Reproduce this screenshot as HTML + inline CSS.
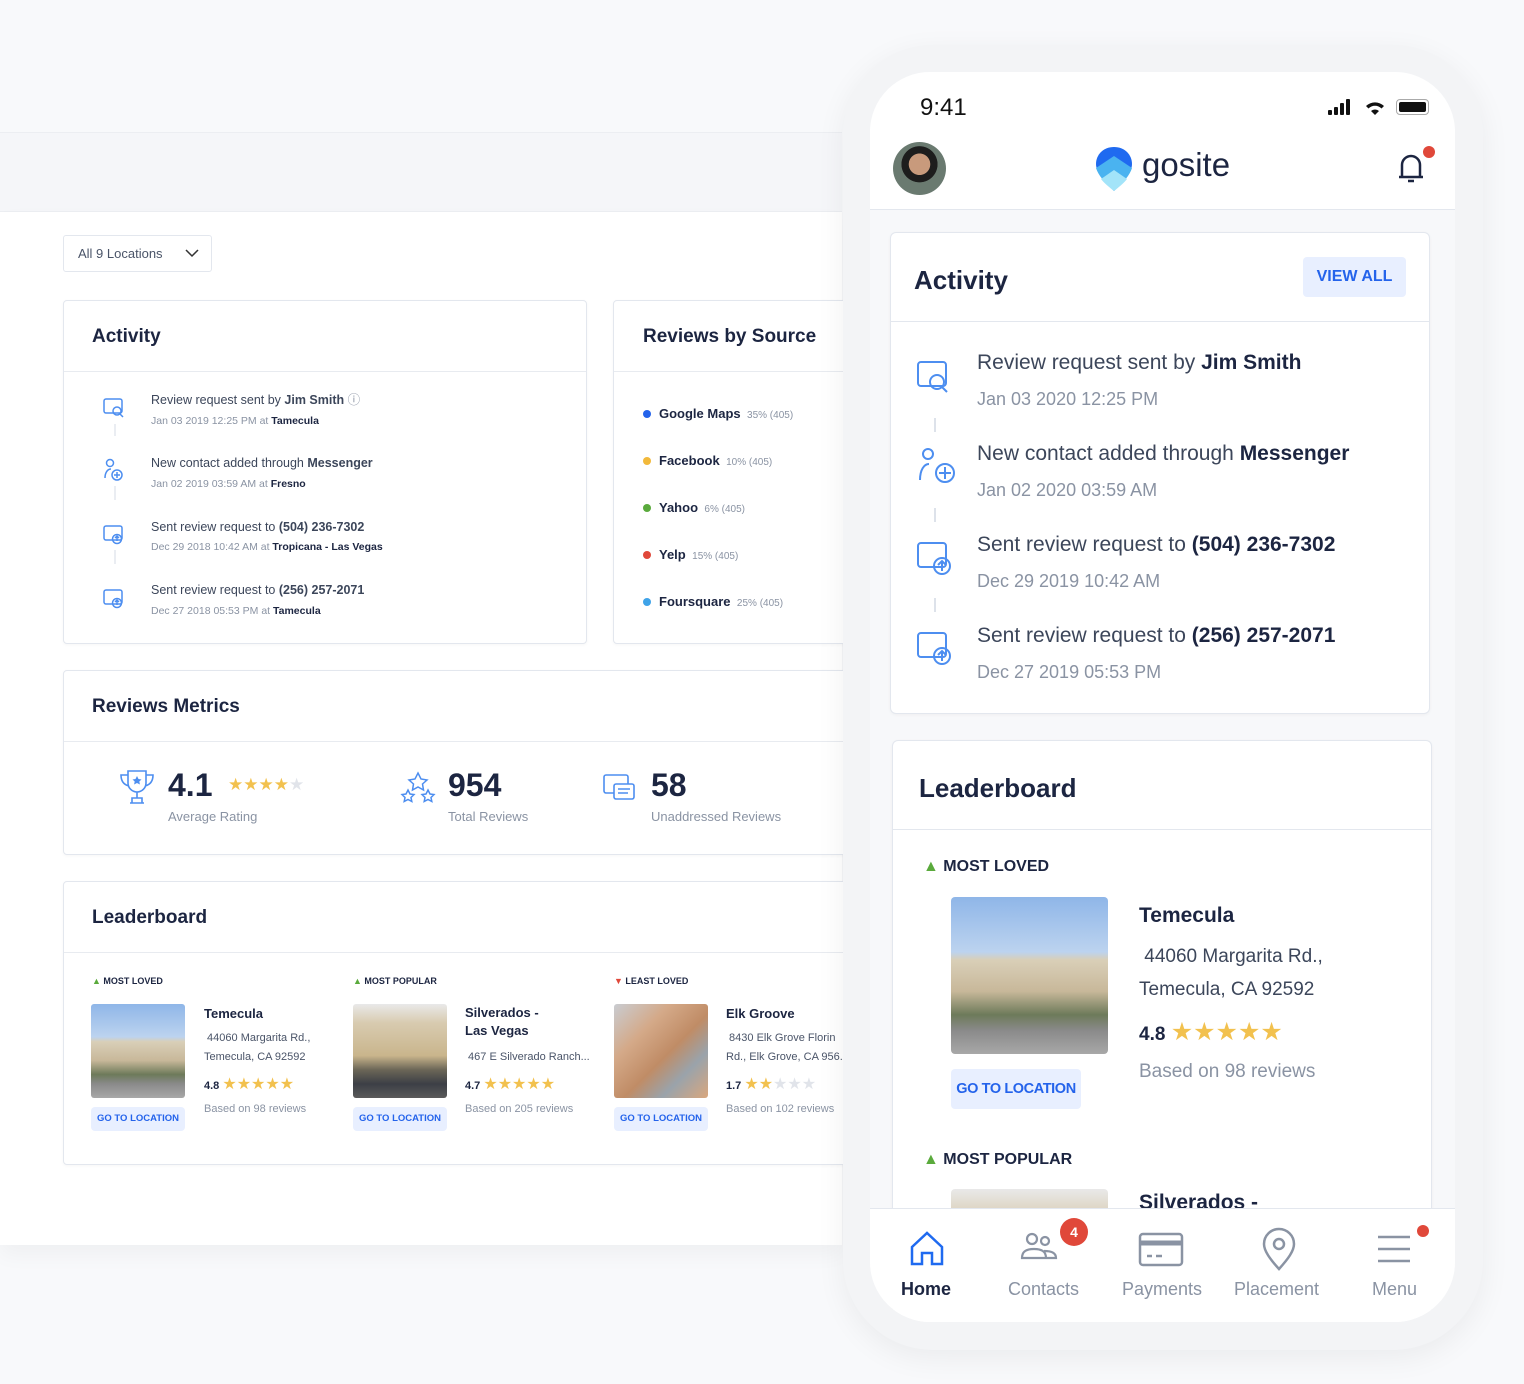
<!DOCTYPE html>
<html><head><meta charset="utf-8"><style>
*{box-sizing:border-box;margin:0;padding:0}
body{width:1524px;height:1384px;background:#f8f9fb;font-family:"Liberation Sans",sans-serif;color:#1c2541;position:relative;overflow:hidden}
.abs{position:absolute}
.card{position:absolute;background:#fff;border:1px solid #e3e7ee;border-radius:4px;box-shadow:0 1px 3px rgba(0,0,0,.04)}
.h{font-weight:bold;color:#1c2541}
.g{color:#8a93a3}
.dot{display:inline-block;width:8px;height:8px;border-radius:50%;margin-right:8px}
.star{color:#f2c14e}
.gs{color:#e1e4ea}
.btn{background:#e8efff;color:#2463eb;font-weight:bold;border-radius:4px;text-align:center;white-space:nowrap}
.photo1{background:linear-gradient(180deg,#8fb6e8 0%,#bcd3ef 35%,#d9cfb8 40%,#c8b89a 60%,#6d7a5a 75%,#8a8a8a 85%,#a8a8a8 100%)}
.photo2{background:linear-gradient(180deg,#e9e9e9 0%,#d8cbb0 20%,#c9b58c 55%,#6b6657 70%,#3c3f46 85%,#5a5a5a 100%)}
.photo3{background:linear-gradient(135deg,#c9ccd1,#d4a988 30%,#c08c66 55%,#9aa3ab 75%,#d9a77d)}
</style></head><body>
<!-- desktop -->
<div class="abs" style="left:0;top:132px;width:842px;height:80px;background:#f5f6f9;border-top:1px solid #eceef2;border-bottom:1px solid #eceef2"></div>
<div class="abs" style="left:0;top:212px;width:842px;height:1033px;background:#fff;box-shadow:0 10px 20px rgba(0,0,0,.04)"></div>
<div class="abs" style="left:63px;top:235px;width:149px;height:37px;border:1px solid #e3e7ee;border-radius:3px;font-size:13px;color:#4a5468;padding:10px 14px">All 9 Locations
<svg style="position:absolute;right:12px;top:13px" width="14" height="9" fill="none" stroke="#333" stroke-width="1.5"><path d="M1 1l6 6 6-6"/></svg></div>

<div class="card" style="left:63px;top:300px;width:524px;height:344px">
 <div class="h" style="position:absolute;left:28px;top:25px;font-size:19px">Activity</div>
 <div style="position:absolute;left:0;top:70px;width:100%;border-top:1px solid #e8ebf0"></div>
 <div style="position:absolute;left:87px;top:88px;font-size:12.5px;line-height:1.8;color:#3c465a">
  <div>Review request sent by <b>Jim Smith</b> <span class="g">ⓘ</span></div><div style="font-size:10.5px" class="g">Jan 03 2019 12:25 PM at <b style="color:#1c2541">Tamecula</b></div>
  <div style="margin-top:22px">New contact added through <b>Messenger</b></div><div style="font-size:10.5px" class="g">Jan 02 2019 03:59 AM at <b style="color:#1c2541">Fresno</b></div>
  <div style="margin-top:22px">Sent review request to <b>(504) 236-7302</b></div><div style="font-size:10.5px" class="g">Dec 29 2018 10:42 AM at <b style="color:#1c2541">Tropicana - Las Vegas</b></div>
  <div style="margin-top:22px">Sent review request to <b>(256) 257-2071</b></div><div style="font-size:10.5px" class="g">Dec 27 2018 05:53 PM at <b style="color:#1c2541">Tamecula</b></div>
 </div>
 <svg style="position:absolute;left:38px;top:95px" width="26" height="220" fill="none" stroke="#4d8ef0" stroke-width="1.5">
  <path d="M13 28v12M13 90v14M13 154v14" stroke="#e3e7ee"/>
  <rect x="2" y="3" width="18" height="14" rx="2"/><circle cx="15" cy="15" r="4"/><line x1="18" y1="18" x2="21" y2="21"/>
  <circle cx="8" cy="67" r="3.5"/><path d="M3 82c0-6 3-9 6-9"/><circle cx="15" cy="79" r="5"/><path d="M15 76v6M12 79h6"/>
  <rect x="2" y="130" width="18" height="14" rx="2"/><circle cx="15" cy="143" r="4.5"/><path d="M15 145v-5M13 142l2-2 2 2"/>
  <rect x="2" y="194" width="18" height="14" rx="2"/><circle cx="15" cy="207" r="4.5"/><path d="M15 209v-5M13 206l2-2 2 2"/>
 </svg>
</div>

<div class="card" style="left:613px;top:300px;width:240px;height:344px">
 <div class="h" style="position:absolute;left:29px;top:25px;font-size:19px">Reviews by Source</div>
 <div style="position:absolute;left:0;top:70px;width:100%;border-top:1px solid #e8ebf0"></div>
 <div style="position:absolute;left:29px;top:90px;font-size:13px;line-height:45px;font-weight:bold">
  <div><span class="dot" style="background:#2463eb"></span>Google Maps <span class="g" style="font-weight:normal;font-size:10px">&nbsp;35% (405)</span></div>
  <div><span class="dot" style="background:#f2b93b"></span>Facebook <span class="g" style="font-weight:normal;font-size:10px">&nbsp;10% (405)</span></div>
  <div><span class="dot" style="background:#5aaa3c"></span>Yahoo <span class="g" style="font-weight:normal;font-size:10px">&nbsp;6% (405)</span></div>
  <div><span class="dot" style="background:#e0483a"></span>Yelp <span class="g" style="font-weight:normal;font-size:10px">&nbsp;15% (405)</span></div>
  <div><span class="dot" style="background:#3fa3e8"></span>Foursquare <span class="g" style="font-weight:normal;font-size:10px">&nbsp;25% (405)</span></div>
 </div>
</div>

<div class="card" style="left:63px;top:670px;width:790px;height:185px">
 <div class="h" style="position:absolute;left:28px;top:25px;font-size:19px">Reviews Metrics</div>
 <div style="position:absolute;left:0;top:70px;width:100%;border-top:1px solid #e8ebf0"></div>
 <svg style="position:absolute;left:54px;top:97px" width="38" height="38" fill="none" stroke="#4d8ef0" stroke-width="1.6"><path d="M10 3h18v12a9 9 0 0 1-18 0zM10 7H3c0 7 4 10 8 11M28 7h7c0 7-4 10-8 11M19 24v6M12 35h14M14 30h10v5H14z"/><path d="M19 8l1.5 3 3 .5-2.2 2 .6 3-2.9-1.5-2.9 1.5.6-3-2.2-2 3-.5z" fill="#4d8ef0" stroke="none"/></svg>
 <div class="h" style="position:absolute;left:104px;top:96px;font-size:32px">4.1</div>
 <div style="position:absolute;left:164px;top:104px;font-size:17px"><span class="star">★★★★</span><span class="gs">★</span></div>
 <div class="g" style="position:absolute;left:104px;top:138px;font-size:13px">Average Rating</div>
 <svg style="position:absolute;left:334px;top:100px" width="40" height="36" fill="none" stroke="#4d8ef0" stroke-width="1.5"><path d="M20 2l3 6 6 1-4.5 4 1 6-5.5-3-5.5 3 1-6L11 9l6-1z"/><path d="M10 19l2 4 4 .5-3 3 .8 4-3.8-2-3.8 2 .8-4-3-3 4-.5zM30 19l2 4 4 .5-3 3 .8 4-3.8-2-3.8 2 .8-4-3-3 4-.5z"/></svg>
 <div class="h" style="position:absolute;left:384px;top:96px;font-size:32px">954</div>
 <div class="g" style="position:absolute;left:384px;top:138px;font-size:13px">Total Reviews</div>
 <svg style="position:absolute;left:538px;top:102px" width="36" height="34" fill="none" stroke="#4d8ef0" stroke-width="1.6"><rect x="2" y="2" width="24" height="18" rx="2"/><rect x="12" y="11" width="20" height="15" rx="2" fill="#fff"/><path d="M16 16h12M16 20h10"/></svg>
 <div class="h" style="position:absolute;left:587px;top:96px;font-size:32px">58</div>
 <div class="g" style="position:absolute;left:587px;top:138px;font-size:13px">Unaddressed Reviews</div>
</div>

<div class="card" style="left:63px;top:881px;width:790px;height:284px">
 <div class="h" style="position:absolute;left:28px;top:25px;font-size:19px">Leaderboard</div>
 <div style="position:absolute;left:0;top:70px;width:100%;border-top:1px solid #e8ebf0"></div>
</div>
<div class="abs" style="left:92px;top:976px;font-size:9px;font-weight:bold"><span style="color:#5aaa3c">▲</span> MOST LOVED</div>
<div class="abs" style="left:353px;top:976px;font-size:9px;font-weight:bold"><span style="color:#5aaa3c">▲</span> MOST POPULAR</div>
<div class="abs" style="left:614px;top:976px;font-size:9px;font-weight:bold"><span style="color:#e0483a">▼</span> LEAST LOVED</div>
<div class="abs photo1" style="left:91px;top:1004px;width:94px;height:94px;border-radius:3px"></div>
<div class="abs photo2" style="left:353px;top:1004px;width:94px;height:94px;border-radius:3px"></div>
<div class="abs photo3" style="left:614px;top:1004px;width:94px;height:94px;border-radius:3px"></div>
<div class="abs btn" style="left:91px;top:1107px;width:94px;height:24px;font-size:9.5px;line-height:24px">GO TO LOCATION</div>
<div class="abs btn" style="left:353px;top:1107px;width:94px;height:24px;font-size:9.5px;line-height:24px">GO TO LOCATION</div>
<div class="abs btn" style="left:614px;top:1107px;width:94px;height:24px;font-size:9.5px;line-height:24px">GO TO LOCATION</div>
<div class="abs" style="left:204px;top:1004px;font-size:11px;line-height:19px;width:130px">
 <div class="h" style="font-size:13px">Temecula</div><div style="margin-top:6px;color:#4a5468">&nbsp;44060 Margarita Rd.,<br>Temecula, CA 92592</div>
 <div style="margin-top:8px"><b>4.8</b> <span class="star" style="font-size:16px">★★★★★</span></div><div class="g" style="margin-top:4px">Based on 98 reviews</div></div>
<div class="abs" style="left:465px;top:1004px;font-size:11px;line-height:18px;width:130px">
 <div class="h" style="font-size:13px">Silverados -<br>Las Vegas</div><div style="margin-top:8px;color:#4a5468">&nbsp;467 E Silverado Ranch...</div>
 <div style="margin-top:10px"><b>4.7</b> <span class="star" style="font-size:16px">★★★★★</span></div><div class="g" style="margin-top:5px">Based on 205 reviews</div></div>
<div class="abs" style="left:726px;top:1004px;font-size:11px;line-height:19px;width:116px;overflow:hidden;white-space:nowrap">
 <div class="h" style="font-size:13px">Elk Groove</div><div style="margin-top:6px;color:#4a5468">&nbsp;8430 Elk Grove Florin<br>Rd., Elk Grove, CA 956..</div>
 <div style="margin-top:8px"><b>1.7</b> <span class="star" style="font-size:16px">★★</span><span class="gs" style="font-size:16px">★★★</span></div><div class="g" style="margin-top:4px">Based on 102 reviews</div></div>

<!-- phone -->
<div class="abs" style="left:843px;top:45px;width:640px;height:1305px;border-radius:90px;background:#f3f4f6;box-shadow:0 8px 30px rgba(0,0,0,.06)"></div>
<div class="abs" style="left:870px;top:72px;width:585px;height:1250px;border-radius:60px;background:#f7f8fa;overflow:hidden">
 <div style="position:absolute;left:0;top:0;width:100%;height:138px;background:#fff;border-bottom:1px solid #e3e7ee"></div>
 <div style="position:absolute;left:50px;top:22px;font-size:24px;color:#111">9:41</div>
 <div style="position:absolute;left:458px;top:38px;width:4px;height:5px;background:#111;border-radius:1px"></div>
 <div style="position:absolute;left:464px;top:35px;width:4px;height:8px;background:#111;border-radius:1px"></div>
 <div style="position:absolute;left:470px;top:31px;width:4px;height:12px;background:#111;border-radius:1px"></div>
 <div style="position:absolute;left:476px;top:27px;width:4px;height:16px;background:#111;border-radius:1px"></div>
 <svg style="position:absolute;left:493px;top:26px" width="24" height="18"><path d="M12 17l-4-4a6 6 0 0 1 8 0z M3 8a13 13 0 0 1 18 0l-2.5 2.5a9 9 0 0 0-13 0z" fill="#111"/></svg>
 <div style="position:absolute;left:526px;top:27px;width:33px;height:16px;border-radius:4px;border:1.5px solid #aaa;padding:2px"><div style="width:100%;height:100%;background:#111;border-radius:2px"></div></div>
 <div style="position:absolute;left:23px;top:70px;width:53px;height:53px;border-radius:50%;background:radial-gradient(circle at 50% 42%,#c89a7c 0 26%,#1d1d1d 27% 44%,#6a7a70 45%)"></div>
 <svg style="position:absolute;left:225px;top:74px" width="38" height="46"><path d="M19 1C8 1 1 9 1 18c0 9 9 18 18 27 9-9 18-18 18-27C37 9 30 1 19 1z" fill="#1f6af0"/><path d="M1 22l18-12 18 12c-2 7-9 15-18 23C10 37 3 29 1 22z" fill="#4ab3f0"/><path d="M6 33l13-9 13 9c-3 4-8 8-13 12-5-4-10-8-13-12z" fill="#a3e4f9"/></svg>
 <div style="position:absolute;left:272px;top:74px;font-size:33px;color:#1c2541">gosite</div>
 <svg style="position:absolute;left:524px;top:75px" width="36" height="40" fill="none" stroke="#1c2541" stroke-width="2.5"><path d="M5 30h24M8 30V18a9 9 0 0 1 18 0v12M14 34h6"/></svg>
 <div style="position:absolute;left:553px;top:74px;width:12px;height:12px;border-radius:50%;background:#e0483a"></div>

 <div class="card" style="left:20px;top:160px;width:540px;height:482px;border-radius:6px">
  <div class="h" style="position:absolute;left:23px;top:32px;font-size:26px">Activity</div>
  <div class="btn" style="position:absolute;left:412px;top:24px;width:103px;height:40px;line-height:40px;font-size:16px">VIEW ALL</div>
  <div style="position:absolute;left:0;top:88px;width:100%;border-top:1px solid #e3e7ee"></div>
  <div style="position:absolute;left:86px;top:112px;font-size:21px;line-height:36px;color:#3c465a">
   <div>Review request sent by <b style="color:#1c2541">Jim Smith</b></div><div class="g" style="font-size:18px">Jan 03 2020 12:25 PM</div>
   <div style="margin-top:19px">New contact added through <b style="color:#1c2541">Messenger</b></div><div class="g" style="font-size:18px">Jan 02 2020 03:59 AM</div>
   <div style="margin-top:19px">Sent review request to <b style="color:#1c2541">(504) 236-7302</b></div><div class="g" style="font-size:18px">Dec 29 2019 10:42 AM</div>
   <div style="margin-top:19px">Sent review request to <b style="color:#1c2541">(256) 257-2071</b></div><div class="g" style="font-size:18px">Dec 27 2019 05:53 PM</div>
  </div>
  <svg style="position:absolute;left:24px;top:125px" width="42" height="320" fill="none" stroke="#4d8ef0" stroke-width="2">
   <rect x="3" y="4" width="28" height="24" rx="3"/><circle cx="22" cy="24" r="7"/><line x1="27" y1="29" x2="32" y2="34"/>
   <line x1="20" y1="60" x2="20" y2="74" stroke="#dde2ea"/>
   <circle cx="13" cy="96" r="5"/><path d="M5 122c0-10 4-16 9-16"/><circle cx="30" cy="115" r="9"/><path d="M30 109v12M24 115h12"/>
   <line x1="20" y1="150" x2="20" y2="164" stroke="#dde2ea"/>
   <rect x="3" y="185" width="28" height="24" rx="3"/><circle cx="27" cy="208" r="8"/><path d="M27 213v-9M23 207l4-4 4 4"/>
   <line x1="20" y1="240" x2="20" y2="254" stroke="#dde2ea"/>
   <rect x="3" y="275" width="28" height="24" rx="3"/><circle cx="27" cy="298" r="8"/><path d="M27 303v-9M23 297l4-4 4 4"/>
  </svg>
 </div>

 <div class="card" style="left:22px;top:668px;width:540px;height:600px;border-radius:6px">
  <div class="h" style="position:absolute;left:26px;top:32px;font-size:26px">Leaderboard</div>
  <div style="position:absolute;left:0;top:88px;width:100%;border-top:1px solid #e3e7ee"></div>
  <div style="position:absolute;left:30px;top:117px;font-size:16px;font-weight:bold"><span style="color:#5aaa3c">▲</span> MOST LOVED</div>
  <div class="photo1" style="position:absolute;left:58px;top:156px;width:157px;height:157px;border-radius:4px"></div>
  <div class="btn" style="position:absolute;left:58px;top:328px;width:130px;height:40px;line-height:40px;font-size:14.5px;letter-spacing:-0.4px">GO TO LOCATION</div>
  <div style="position:absolute;left:246px;top:158px;font-size:19px;line-height:33px;color:#3c465a">
   <div class="h" style="font-size:21px">Temecula</div><div style="margin-top:8px">&nbsp;44060 Margarita Rd.,<br>Temecula, CA 92592</div>
   <div style="margin-top:10px"><b style="color:#1c2541">4.8</b> <span class="star" style="font-size:25px">★★★★★</span></div><div class="g" style="margin-top:4px">Based on 98 reviews</div></div>
  <div style="position:absolute;left:30px;top:410px;font-size:16px;font-weight:bold"><span style="color:#5aaa3c">▲</span> MOST POPULAR</div>
  <div class="photo2" style="position:absolute;left:58px;top:448px;width:157px;height:157px;border-radius:4px"></div>
  <div class="h" style="position:absolute;left:246px;top:450px;font-size:21px">Silverados -</div>
 </div>

 <div style="position:absolute;left:0;top:1136px;width:100%;height:114px;background:#fff;border-top:1px solid #e3e7ee"></div>
 <svg style="position:absolute;left:38px;top:1157px" width="40" height="40" fill="none" stroke="#1f6af0" stroke-width="2.5"><path d="M4 18L19 4l15 14v17H24V24h-10v11H4z"/></svg>
 <svg style="position:absolute;left:150px;top:1155px" width="44" height="40" fill="none" stroke="#8a93a3" stroke-width="2.2"><circle cx="12" cy="12" r="5"/><circle cx="25" cy="14" r="4"/><path d="M2 31c0-7 5-9 12-9s12 2 12 9zM24 24c6 0 12 1 12 7H26"/></svg>
 <div style="position:absolute;left:190px;top:1146px;width:28px;height:28px;border-radius:50%;background:#e0483a;color:#fff;font-weight:bold;font-size:14px;text-align:center;line-height:28px">4</div>
 <svg style="position:absolute;left:268px;top:1160px" width="48" height="36" fill="none" stroke="#8a93a3" stroke-width="2.5"><rect x="2" y="2" width="42" height="31" rx="3"/><path d="M2 11h42" stroke-width="5"/><path d="M9 24h5M18 24h6"/></svg>
 <svg style="position:absolute;left:390px;top:1155px" width="38" height="46" fill="none" stroke="#8a93a3" stroke-width="2.5"><path d="M19 42C10 32 4 24 4 17a15 15 0 0 1 30 0c0 7-6 15-15 25z"/><circle cx="19" cy="17" r="5"/></svg>
 <svg style="position:absolute;left:505px;top:1160px" width="40" height="34" fill="none" stroke="#8a93a3" stroke-width="2.5"><path d="M3 5h32M3 17h32M3 29h32"/></svg>
 <div style="position:absolute;left:547px;top:1153px;width:12px;height:12px;border-radius:50%;background:#e0483a"></div>
 <div style="position:absolute;top:1207px;left:0;width:100%;font-size:18px;color:#8a93a3">
  <span style="position:absolute;left:31px;color:#1c2541;font-weight:bold">Home</span>
  <span style="position:absolute;left:138px">Contacts</span>
  <span style="position:absolute;left:252px">Payments</span>
  <span style="position:absolute;left:364px">Placement</span>
  <span style="position:absolute;left:502px">Menu</span>
 </div>
</div>
</body></html>
